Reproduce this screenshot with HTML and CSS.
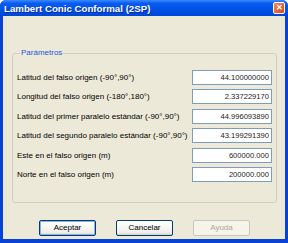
FILE: index.html
```html
<!DOCTYPE html>
<html lang="es">
<head>
    <meta charset="UTF-8">
    <title>Lambert Conic Conformal (2SP)</title>
    <link rel="stylesheet" href="styles.css">
</head>
<body>
    <div class="window">
        <div class="titlebar">
            <span class="title">Lambert Conic Conformal (2SP)</span>
            <span class="close">&#x2715;</span>
        </div>
        <div class="client">
            <fieldset class="group">
                <legend>Parámetros</legend>
                <div class="row">
                    <label for="lat0">Latitud del falso origen (-90°,90°)</label>
                    <input type="text" id="lat0" value="44.100000000">
                </div>
                <div class="row">
                    <label for="lon0">Longitud del falso origen (-180°,180°)</label>
                    <input type="text" id="lon0" value="2.337229170">
                </div>
                <div class="row">
                    <label for="lat1">Latitud del primer paralelo estándar (-90°,90°)</label>
                    <input type="text" id="lat1" value="44.996093890">
                </div>
                <div class="row">
                    <label for="lat2">Latitud del segundo paralelo estándar (-90°,90°)</label>
                    <input type="text" id="lat2" value="43.199291390">
                </div>
                <div class="row">
                    <label for="este">Este en el falso origen (m)</label>
                    <input type="text" id="este" value="600000.000">
                </div>
                <div class="row">
                    <label for="norte">Norte en el falso origen (m)</label>
                    <input type="text" id="norte" value="200000.000">
                </div>
            </fieldset>
            <div class="buttons">
                <button type="button" class="btn default">Aceptar</button>
                <button type="button" class="btn">Cancelar</button>
                <button type="button" class="btn" disabled>Ayuda</button>
            </div>
        </div>
    </div>
</body>
</html>
```

FILE: styles.css
```css
* {
    box-sizing: border-box;
}

body {
    margin: 0;
    font-family: "Liberation Sans", Arial, sans-serif;
    font-size: 8px;
    color: #000;
}

.window {
    width: 288px;
    height: 243px;
    display: flex;
    flex-direction: column;
    background: #0842d6;
    border-radius: 6px 6px 0 0;
    overflow: hidden;
}

.titlebar {
    height: 16px;
    display: flex;
    align-items: center;
    justify-content: space-between;
    padding: 0 3px 0 4px;
    background: linear-gradient(#3d8bff 0, #0a5cf0 20%, #0052e6 60%, #0046d8 100%);
}
.title {
    color: #fff;
    font-weight: bold;
    font-size: 9.7px;
    text-shadow: 1px 1px 0 #0a2a9a;
}
.close {
    width: 12px;
    height: 12px;
    border: 1px solid #fff;
    border-radius: 2px;
    background: linear-gradient(135deg, #f08a5f, #d9461c);
    color: #fff;
    font-size: 8px;
    font-weight: bold;
    line-height: 10px;
    text-align: center;
}

.client {
    flex: 1;
    margin: 0 3px 4px 3px;
    background: #ece9d8;
    padding: 0 8px 0 9px;
    display: flex;
    flex-direction: column;
}

.group {
    margin: 32px 0 0 0;
    padding: 12px 4px 20px 4px;
    border: 1px solid #d0d0bf;
    border-radius: 3px;
    display: flex;
    flex-direction: column;
    gap: 4.4px;
    min-width: 0;
}
.group legend {
    padding: 0 1px;
    margin-left: 3px;
    color: #2458d8;
    line-height: 10px;
    font-size: 8px;
}

.row {
    display: flex;
    align-items: center;
    justify-content: space-between;
    height: 15px;
}
.row label {
    white-space: nowrap;
}
.row input {
    width: 80px;
    height: 15px;
    border: 1px solid #7f9db9;
    background: #fff;
    text-align: right;
    font-family: "Liberation Sans", Arial, sans-serif;
    font-size: 7.6px;
    padding: 0 2px;
    margin: 0;
    color: #222;
}

.buttons {
    margin-top: 17px;
    display: flex;
    justify-content: center;
    gap: 20px;
}
.btn {
    width: 57px;
    height: 16px;
    padding: 0;
    font-family: "Liberation Sans", Arial, sans-serif;
    font-size: 8px;
    color: #000;
    border: 1px solid #003c74;
    border-radius: 2px;
    background: linear-gradient(#fff, #f0f0ea 80%, #d6d0c5);
}
.btn.default {
    box-shadow: inset 0 0 0 1px #8fb0ee;
}
.btn:disabled {
    color: #aca899;
    border-color: #c9c7ba;
    background: #f5f4ea;
}
```
